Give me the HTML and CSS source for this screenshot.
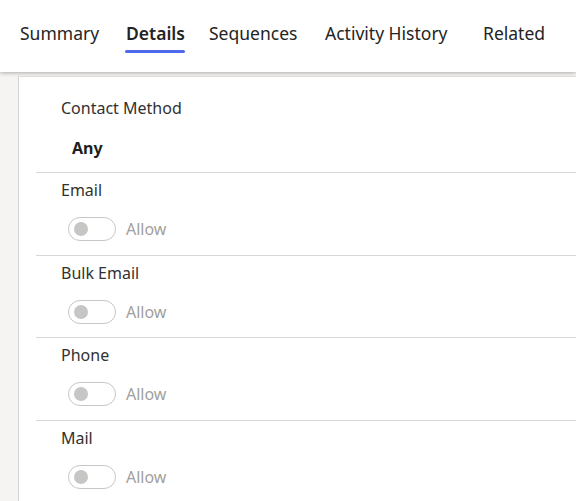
FILE: index.html
```html
<!DOCTYPE html>
<html lang="en">
<head>
    <meta charset="UTF-8">
    <meta name="viewport" content="width=device-width, initial-scale=1.0">
    <title>Contact Details</title>
    <link rel="stylesheet" href="styles.css">
</head>
<body>

    <div class="tabBar">
        <div class="tab summary">Summary</div>
        <div class="tab details active">Details</div>
        <div class="tab sequences">Sequences</div>
        <div class="tab activity">Activity History</div>
        <div class="tab">Related</div>
    </div>

    <div class="page">
        <div class="card">
            <div class="field first">
                <div class="label">Contact Method</div>
                <div class="value">Any</div>
            </div>

            <div class="field">
                <div class="label">Email</div>
                <div class="toggleRow">
                    <span class="toggle"><span class="knob"></span></span>
                    <span class="toggleText">Allow</span>
                </div>
            </div>

            <div class="field">
                <div class="label">Bulk Email</div>
                <div class="toggleRow">
                    <span class="toggle"><span class="knob"></span></span>
                    <span class="toggleText">Allow</span>
                </div>
            </div>

            <div class="field">
                <div class="label">Phone</div>
                <div class="toggleRow">
                    <span class="toggle"><span class="knob"></span></span>
                    <span class="toggleText">Allow</span>
                </div>
            </div>

            <div class="field">
                <div class="label">Mail</div>
                <div class="toggleRow">
                    <span class="toggle"><span class="knob"></span></span>
                    <span class="toggleText">Allow</span>
                </div>
            </div>
        </div>
    </div>

</body>
</html>
```

FILE: styles.css
```css
body {
    font-family: "Noto Sans", "Open Sans", sans-serif;
    margin: 0;
    background-color: #f5f4f3;
    overflow: hidden;
}
.tabBar {
    position: relative;
    z-index: 1;
    display: flex;
    align-items: flex-start;
    height: 72px;
    padding-left: 20px;
    background-color: #fff;
    box-shadow: 0 1px 4px rgba(0, 0, 0, 0.3);
}
.tab {
    margin-top: 20px;
    font-size: 17.5px;
    line-height: 26px;
    color: #242424;
    white-space: nowrap;
}
.tab.summary { width: 106px; }
.tab.details { width: 83px; }
.tab.sequences { width: 116px; }
.tab.activity { width: 158px; }
.tab.active {
    font-weight: 600;
}
.tab.active::after {
    content: "";
    display: block;
    width: 60px;
    height: 3px;
    margin: 4px 0 0 -1px;
    border-radius: 2px;
    background-color: #4f6bed;
}
.page {
    padding: 4px 0 0 18px;
}
.card {
    background-color: #fff;
    border-top: 1px solid #e1dfdd;
    border-left: 1px solid #d6d4d2;
    height: 440px;
}
.field {
    margin-left: 17px;
    padding: 6px 0 0 25px;
    height: 82.5px;
    box-sizing: border-box;
    border-top: 1px solid #d8d8d8;
}
.field.first {
    border-top: none;
    padding-top: 20px;
    height: 95px;
}
.label {
    font-size: 16px;
    line-height: 22px;
    color: #323130;
}
.value {
    margin-top: 18px;
    padding-left: 11px;
    font-size: 16px;
    line-height: 22px;
    font-weight: 700;
    color: #201f1e;
}
.toggleRow {
    display: flex;
    align-items: center;
    gap: 10px;
    margin-top: 16px;
    padding-left: 7px;
}
.toggle {
    display: flex;
    align-items: center;
    box-sizing: border-box;
    width: 48px;
    height: 24px;
    padding-left: 5px;
    border: 1px solid #c8c6c4;
    border-radius: 12px;
}
.knob {
    width: 14px;
    height: 14px;
    border-radius: 50%;
    background-color: #c8c6c4;
}
.toggleText {
    font-size: 16px;
    color: #a19f9d;
}
```
